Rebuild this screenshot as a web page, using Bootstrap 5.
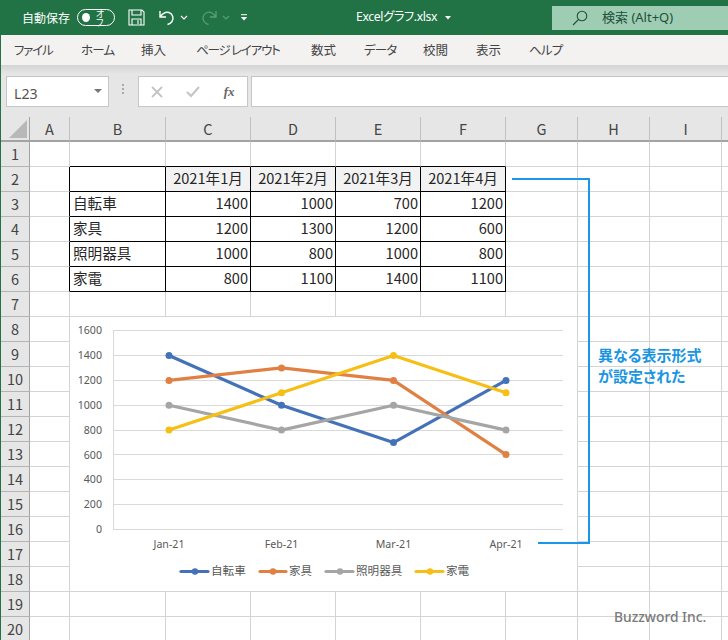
<!DOCTYPE html>
<html lang="ja">
<head>
<meta charset="utf-8">
<title>Excelグラフ.xlsx</title>
<link href="https://cdn.jsdelivr.net/npm/bootstrap@5.3.0/dist/css/bootstrap.min.css" rel="stylesheet">
<style>
html,body{margin:0;height:640px;overflow:hidden;background:#e6e6e6}
body{font-family:"Noto Sans","Noto Sans CJK JP",sans-serif;font-feature-settings:"palt";width:728px}
.xl-app{width:728px;height:640px;border-left:1px solid #217346;overflow:hidden}
.xl-title{height:35px;margin-left:-1px;background:#217346;color:#fff;position:relative}
.xl-autosave{font-size:12px;margin-left:22px;width:48px;white-space:nowrap;font-family:"Noto Sans CJK JP",sans-serif}
.xl-toggle{width:38px;height:17px;margin-left:7px;border:1.2px solid #fff;border-radius:9px;padding:0 4px;font-size:9px;font-family:"Noto Sans CJK JP",sans-serif;line-height:1}
.xl-knob{width:9px;height:9px;border-radius:50%;background:#fff;margin-right:6px}
.xl-qat{margin-left:13px;display:block}
.xl-doc{position:absolute;left:356px;top:0;height:35px;font-size:12.2px;letter-spacing:-.35px;white-space:nowrap}
.xl-search{position:absolute;left:552px;top:6px;width:176px;height:24px;background:#9fcdb3;color:#20503a;font-size:13px;white-space:nowrap}
.xl-tabs{height:30px;background:#f3f2f1;color:#444;font-size:12.5px;font-family:"Noto Sans CJK JP",sans-serif;white-space:nowrap}
.xl-tab{position:absolute;top:6px}
.xl-kana{letter-spacing:-.8px}
.xl-kana-w{letter-spacing:-1.2px}
.xl-tabs-in{position:relative;height:30px;width:100%}
.xl-bar{height:52px;padding-top:11px;background:linear-gradient(#d4d4d4,#e6e6e6 9px);}
.xl-name{width:103px;height:31px;margin-left:5px;background:#fff;border:1px solid #c6c6c6;color:#555;font-size:14.2px;padding:4px 6px 0 7px}
.xl-caret{width:0;height:0;border-left:4px solid transparent;border-right:4px solid transparent;border-top:4px solid #777;margin-top:-6px}
.xl-dots{width:2px;height:10px;margin:0 13.5px 0 13px;background:repeating-linear-gradient(#aaa 0 2px,transparent 2px 4px)}
.xl-fbox{width:110px;height:31px;background:#fff;border:1px solid #c6c6c6;padding:0 12px}
.xl-fx{font-family:"Liberation Serif",serif;font-style:italic;font-weight:700;font-size:13px;color:#666}
.xl-input{flex:1;height:31px;margin-left:3px;background:#fff;border:1px solid #c6c6c6;border-right:0}
.xl-sheetwrap{position:relative;height:523px}
.xl-sheet{border-collapse:separate;border-spacing:0;table-layout:fixed;width:740px;background:#fff;font-family:"Noto Sans CJK JP",sans-serif;font-size:14.6px;color:#262626}
.xl-sheet th,.xl-sheet td{height:25px;padding:0;box-sizing:border-box;line-height:1;overflow:hidden;white-space:nowrap;border-right:1px solid #d4d4d4;border-bottom:1px solid #d4d4d4;font-weight:400}
.xl-sheet thead th{height:25px;background:#e6e6e6;text-align:center;border-right:1px solid #c0c0c0;border-bottom:2px solid #a3a3a3;color:#444;font-size:14.5px;padding-top:1px}
.xl-sheet tbody th{background:#e6e6e6;text-align:center;border-right:1px solid #a3a3a3;border-bottom:1px solid #b4b4b4;color:#444;font-size:14.5px}
.xl-sheet thead th.xl-corner{position:relative;border-right-color:#a3a3a3}
.xl-corner svg{position:absolute;left:8px;top:3px}
.xl-sheet td.xl-t{border-bottom-color:#000}
.xl-sheet td.xl-l{border-right-color:#000}
.xl-sheet td.xl-c{border-right-color:#000;border-bottom-color:#000;padding:0 2px 2px 3px;text-align:right}
.xl-sheet td.xl-s{text-align:left}
.xl-sheet td.xl-h{background:#f2f2f2;text-align:center;padding:0 0 2px}
.xl-sheet td.xl-b{background:#fff}
.xl-over{position:absolute;left:-1px;top:0;width:728px;height:523px;pointer-events:none}
.xl-over text{font-family:"Noto Sans","Noto Sans CJK JP",sans-serif;font-feature-settings:"palt"}
.xl-ax{font-size:10.6px;fill:#595959}
.xl-lg{font-size:11.6px;fill:#595959}
.xl-note{font-size:15px;font-weight:700;fill:#1a95e0}
.xl-wm{font-size:13.8px;font-weight:500;fill:#7a7a7a}
</style>
</head>
<body>
<div class="xl-app">
  <div class="xl-title d-flex align-items-center">
    <span class="xl-autosave">自動保存</span>
    <span class="xl-toggle d-flex align-items-center"><span class="xl-knob"></span>オフ</span>
    <svg class="xl-qat" width="17" height="17" viewBox="0 0 17 17" fill="none" stroke="#fff" stroke-width="1.1"><path d="M1 1h13l2 2v13H1zM4 1v5h9V1M4 16v-6h9v6M10 11v4"/></svg>
    <svg class="xl-qat" width="18" height="18" viewBox="0 0 18 18" fill="none" stroke="#fff" stroke-width="1.4"><path d="M2 2v6h6M2.5 7.5C5 4 8 2.5 11 3.500c4 1.500 5 6 3 9-1 1.500-2.500 2.500-4.500 3"/></svg>
    <svg width="8" height="6" viewBox="0 0 8 6" fill="none" stroke="#fff" stroke-width="1.200" style="margin-left:4px"><path d="M1 1l3 3 3-3"/></svg>
    <svg width="18" height="18" viewBox="0 0 18 18" fill="none" stroke="#5c9c7c" stroke-width="1.300" style="margin-left:12px"><path d="M16 2v6h-6M15.500 7.500C13 4 10 2.500 7 3.500c-4 1.500-5 6-3 9 1 1.500 2.500 2.500 4.500 3"/></svg>
    <svg width="8" height="6" viewBox="0 0 8 6" fill="none" stroke="#5c9c7c" stroke-width="1.200" style="margin-left:4px"><path d="M1 1l3 3 3-3"/></svg>
    <svg width="8" height="8" viewBox="0 0 8 8" style="margin-left:10px"><path d="M1 .7h6" stroke="#fff" stroke-width="1"/><path d="M.8 3h6.400L4 6.500z" fill="#fff"/></svg>
    <div class="xl-doc d-flex align-items-center">Excelグラフ.xlsx<svg width="6" height="4" viewBox="0 0 6 4" style="margin-left:8px"><path d="M0 0h6L3 3.500z" fill="#fff"/></svg></div>
    <div class="xl-search d-flex align-items-center">
      <svg width="16" height="16" viewBox="0 0 16 16" fill="none" stroke="#20503a" stroke-width="1.100" style="margin-left:20px"><circle cx="10" cy="6" r="4.800"/><path d="M6.500 9.500L1 15"/></svg>
      <span style="margin-left:14px">検索 (Alt+Q)</span>
    </div>
  </div>
  <div class="xl-tabs"><div class="xl-tabs-in">
    <span class="xl-tab xl-kana-w" style="left:13px">ファイル</span>
    <span class="xl-tab xl-kana" style="left:80px">ホーム</span>
    <span class="xl-tab" style="left:140px">挿入</span>
    <span class="xl-tab xl-kana-w" style="left:195px">ページ レイアウト</span>
    <span class="xl-tab" style="left:310px">数式</span>
    <span class="xl-tab xl-kana" style="left:363px">データ</span>
    <span class="xl-tab" style="left:422px">校閲</span>
    <span class="xl-tab" style="left:475px">表示</span>
    <span class="xl-tab xl-kana" style="left:528px">ヘルプ</span>
  </div></div>
  <div class="xl-bar d-flex align-items-start">
    <div class="xl-name d-flex align-items-center justify-content-between"><span>L23</span><span class="xl-caret"></span></div>
    <div class="xl-dots align-self-start mt-2"></div>
    <div class="xl-fbox d-flex align-items-center justify-content-between">
      <svg width="12" height="12" viewBox="0 0 12 12" stroke="#c4c4c4" stroke-width="1.800"><path d="M1 1l10 10M11 1L1 11"/></svg>
      <svg width="14" height="12" viewBox="0 0 14 12" fill="none" stroke="#c4c4c4" stroke-width="2"><path d="M1 6l4 4 8-9"/></svg>
      <span class="xl-fx">fx</span>
    </div>
    <div class="xl-input"></div>
  </div>
  <div class="xl-sheetwrap">
    <table class="xl-sheet">
      <colgroup><col style="width:29px"><col style="width:40px"><col style="width:96px"><col style="width:85px"><col style="width:85px"><col style="width:85px"><col style="width:85px"><col style="width:72px"><col style="width:72px"><col style="width:72px"><col style="width:19px"></colgroup>
      <thead><tr><th class="xl-corner"><svg width="18" height="18" viewBox="0 0 18 18"><path d="M18 0v18H0z" fill="#b8b8b8"/></svg></th><th>A</th><th>B</th><th>C</th><th>D</th><th>E</th><th>F</th><th>G</th><th>H</th><th>I</th><th></th></tr></thead>
      <tbody>
        <tr><th>1</th><td></td><td class="xl-t"></td><td class="xl-t"></td><td class="xl-t"></td><td class="xl-t"></td><td class="xl-t"></td><td></td><td></td><td></td><td></td></tr>
        <tr><th>2</th><td class="xl-l"></td><td class="xl-c xl-b"></td><td class="xl-c xl-h">2021年1月</td><td class="xl-c xl-h">2021年2月</td><td class="xl-c xl-h">2021年3月</td><td class="xl-c xl-h">2021年4月</td><td></td><td></td><td></td><td></td></tr>
        <tr><th>3</th><td class="xl-l"></td><td class="xl-c xl-s">自転車</td><td class="xl-c">1400</td><td class="xl-c">1000</td><td class="xl-c">700</td><td class="xl-c">1200</td><td></td><td></td><td></td><td></td></tr>
        <tr><th>4</th><td class="xl-l"></td><td class="xl-c xl-s">家具</td><td class="xl-c">1200</td><td class="xl-c">1300</td><td class="xl-c">1200</td><td class="xl-c">600</td><td></td><td></td><td></td><td></td></tr>
        <tr><th>5</th><td class="xl-l"></td><td class="xl-c xl-s">照明器具</td><td class="xl-c">1000</td><td class="xl-c">800</td><td class="xl-c">1000</td><td class="xl-c">800</td><td></td><td></td><td></td><td></td></tr>
        <tr><th>6</th><td class="xl-l"></td><td class="xl-c xl-s">家電</td><td class="xl-c">800</td><td class="xl-c">1100</td><td class="xl-c">1400</td><td class="xl-c">1100</td><td></td><td></td><td></td><td></td></tr>
        <tr><th>7</th><td></td><td></td><td></td><td></td><td></td><td></td><td></td><td></td><td></td><td></td></tr>
        <tr><th>8</th><td></td><td></td><td></td><td></td><td></td><td></td><td></td><td></td><td></td><td></td></tr>
        <tr><th>9</th><td></td><td></td><td></td><td></td><td></td><td></td><td></td><td></td><td></td><td></td></tr>
        <tr><th>10</th><td></td><td></td><td></td><td></td><td></td><td></td><td></td><td></td><td></td><td></td></tr>
        <tr><th>11</th><td></td><td></td><td></td><td></td><td></td><td></td><td></td><td></td><td></td><td></td></tr>
        <tr><th>12</th><td></td><td></td><td></td><td></td><td></td><td></td><td></td><td></td><td></td><td></td></tr>
        <tr><th>13</th><td></td><td></td><td></td><td></td><td></td><td></td><td></td><td></td><td></td><td></td></tr>
        <tr><th>14</th><td></td><td></td><td></td><td></td><td></td><td></td><td></td><td></td><td></td><td></td></tr>
        <tr><th>15</th><td></td><td></td><td></td><td></td><td></td><td></td><td></td><td></td><td></td><td></td></tr>
        <tr><th>16</th><td></td><td></td><td></td><td></td><td></td><td></td><td></td><td></td><td></td><td></td></tr>
        <tr><th>17</th><td></td><td></td><td></td><td></td><td></td><td></td><td></td><td></td><td></td><td></td></tr>
        <tr><th>18</th><td></td><td></td><td></td><td></td><td></td><td></td><td></td><td></td><td></td><td></td></tr>
        <tr><th>19</th><td></td><td></td><td></td><td></td><td></td><td></td><td></td><td></td><td></td><td></td></tr>
        <tr><th>20</th><td></td><td></td><td></td><td></td><td></td><td></td><td></td><td></td><td></td><td></td></tr>
      </tbody>
    </table>
    <svg class="xl-over" viewBox="0 117 728 523">
      <rect x="70" y="317" width="507" height="274" fill="#fff"/>
      <g stroke="#d9d9d9" stroke-width="1" fill="none" shape-rendering="crispEdges">
        <path d="M113 330.500H563M113 355.500H563M113 380.500H563M113 405.500H563M113 430.500H563M113 454.500H563M113 479.500H563M113 504.500H563M113 529.500H563M113.500 330V530"/>
      </g>
      <g class="xl-ax" text-anchor="end">
        <text x="102" y="334">1600</text><text x="102" y="359">1400</text><text x="102" y="384">1200</text><text x="102" y="409">1000</text><text x="102" y="434">800</text><text x="102" y="459">600</text><text x="102" y="483">400</text><text x="102" y="508">200</text><text x="102" y="533">0</text>
      </g>
      <g class="xl-ax" text-anchor="middle">
        <text x="169" y="548">Jan-21</text><text x="281.500" y="548">Feb-21</text><text x="393.500" y="548">Mar-21</text><text x="506" y="548">Apr-21</text>
      </g>
      <g fill="none" stroke-width="3.200" stroke-linecap="round" stroke-linejoin="round">
        <path stroke="#4472b8" d="M169 355.500L281.500 405.300L393.500 442.600L506 380.400"/>
        <path stroke="#e08043" d="M169 380.400L281.500 367.900L393.500 380.400L506 454.600"/>
        <path stroke="#a5a5a5" d="M169 405.300L281.500 430.100L393.500 405.300L506 430.100"/>
        <path stroke="#f5bf16" d="M169 430.100L281.500 392.800L393.500 355.500L506 392.800"/>
      </g>
      <g fill="#4472b8"><circle cx="169" cy="355.500" r="3.500"/><circle cx="281.500" cy="405.300" r="3.500"/><circle cx="393.500" cy="442.600" r="3.500"/><circle cx="506" cy="380.400" r="3.500"/></g>
      <g fill="#e08043"><circle cx="169" cy="380.400" r="3.500"/><circle cx="281.500" cy="367.900" r="3.500"/><circle cx="393.500" cy="380.400" r="3.500"/><circle cx="506" cy="454.600" r="3.500"/></g>
      <g fill="#a5a5a5"><circle cx="169" cy="405.300" r="3.500"/><circle cx="281.500" cy="430.100" r="3.500"/><circle cx="393.500" cy="405.300" r="3.500"/><circle cx="506" cy="430.100" r="3.500"/></g>
      <g fill="#f5bf16"><circle cx="169" cy="430.100" r="3.500"/><circle cx="281.500" cy="392.800" r="3.500"/><circle cx="393.500" cy="355.500" r="3.500"/><circle cx="506" cy="392.800" r="3.500"/></g>
      <g stroke-width="3.200" stroke-linecap="round">
        <path stroke="#4472b8" d="M181 571.500H208"/><circle cx="195" cy="571.500" r="3.200" fill="#4472b8"/>
        <path stroke="#e08043" d="M260 571.500H286"/><circle cx="273" cy="571.500" r="3.200" fill="#e08043"/>
        <path stroke="#a5a5a5" d="M326 571.500H353"/><circle cx="340" cy="571.500" r="3.200" fill="#a5a5a5"/>
        <path stroke="#f5bf16" d="M416 571.500H443"/><circle cx="430" cy="571.500" r="3.200" fill="#f5bf16"/>
      </g>
      <g class="xl-lg">
        <text x="211" y="575">自転車</text><text x="289" y="575">家具</text><text x="356" y="575">照明器具</text><text x="446" y="575">家電</text>
      </g>
      <path d="M512 179H589V543H538" fill="none" stroke="#1a95e8" stroke-width="2"/>
      <text class="xl-note" x="598" y="360.500">異なる表示形式</text>
      <text class="xl-note" x="598" y="381.500">が設定された</text>
      <text class="xl-wm" x="614" y="622">Buzzword Inc.</text>
    </svg>
  </div>
</div>
<script src="https://cdn.jsdelivr.net/npm/bootstrap@5.3.0/dist/js/bootstrap.bundle.min.js"></script>
</body>
</html>
